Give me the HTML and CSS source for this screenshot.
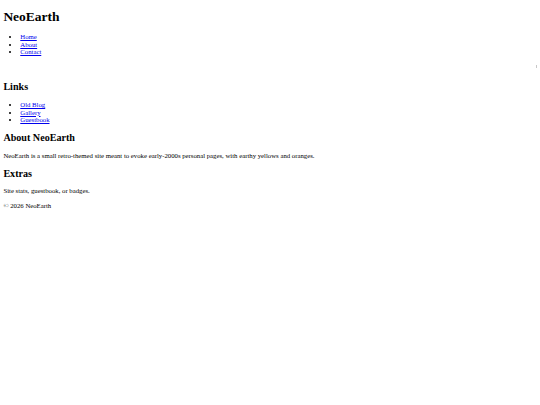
FILE: index.html
```html
<!DOCTYPE html>
<html>
<head>
<meta charset="utf-8">
<title>NeoEarth</title>
<link rel="stylesheet" href="styles.css">
</head>
<body class="page">
<header class="site-header">
  <h1 class="title">NeoEarth</h1>
  <ul class="list">
    <li><a href="#">Home</a></li>
    <li><a href="#">About</a></li>
    <li><a href="#">Contact</a></li>
  </ul>
</header>
<div class="ticker"><span class="ticker-dot"></span></div>
<aside class="sidebar">
  <h2 class="heading">Links</h2>
  <ul class="list">
    <li><a href="#">Old Blog</a></li>
    <li><a href="#">Gallery</a></li>
    <li><a href="#">Guestbook</a></li>
  </ul>
</aside>
<main class="content">
  <h2 class="heading">About NeoEarth</h2>
  <p class="text">NeoEarth is a small retro-themed site meant to evoke early-2000s personal pages, with earthy yellows and oranges.</p>
  <h2 class="heading">Extras</h2>
  <p class="text">Site stats, guestbook, or badges.</p>
</main>
<footer class="footer">
  <p class="text footer-text">&copy; 2026 NeoEarth</p>
</footer>
</body>
</html>
```
FILE: styles.css
```css
html {
  background: #fff;
}
.page {
  margin: 3.375px;
  font-family: "Liberation Serif", "Times New Roman", serif;
  font-size: 6.75px;
  line-height: 7.6px;
  color: #000;
}
.title {
  font-size: 13.5px;
  line-height: 15.5px;
  margin: 6px 0 8.4px;
  font-weight: bold;
}
.heading {
  font-size: 10.125px;
  line-height: 11.6px;
  margin: 8.2px 0;
  font-weight: bold;
}
.list {
  margin: 6.5px 0;
  padding-left: 16.9px;
}
.list a {
  color: #0000ee;
}
.text {
  margin: 6.5px 0;
}
.footer-text {
  margin-top: 7.5px;
}
.ticker {
  height: 10.5px;
  display: flex;
  justify-content: flex-end;
  align-items: flex-start;
  padding-top: 2.5px;
  box-sizing: border-box;
}
.ticker-dot {
  width: 1px;
  height: 3px;
  background: #c8c8c8;
}
```
